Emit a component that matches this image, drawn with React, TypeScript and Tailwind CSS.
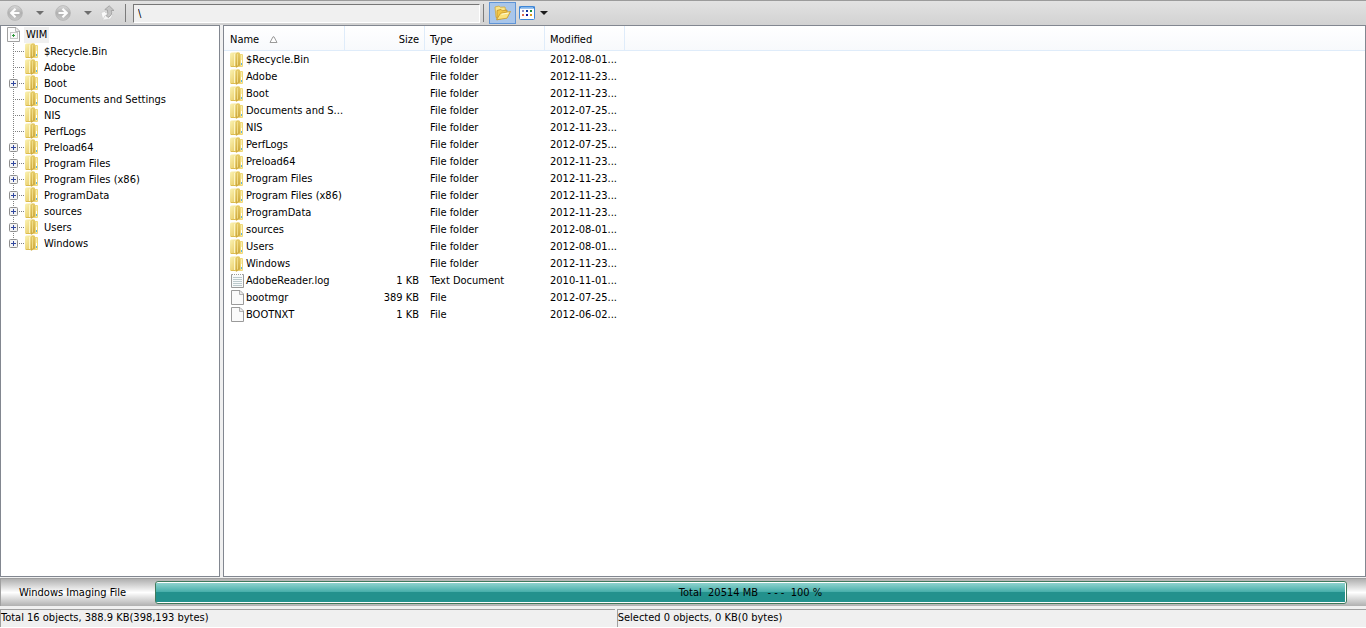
import type { ReactNode } from 'react';

const folders = [
    { name: '$Recycle.Bin', date: '2012-08-01...' },
    { name: 'Adobe', date: '2012-11-23...' },
    { name: 'Boot', date: '2012-11-23...', children: true },
    { name: 'Documents and Settings', short: 'Documents and S...', date: '2012-07-25...' },
    { name: 'NIS', date: '2012-11-23...' },
    { name: 'PerfLogs', date: '2012-07-25...' },
    { name: 'Preload64', date: '2012-11-23...', children: true },
    { name: 'Program Files', date: '2012-11-23...', children: true },
    { name: 'Program Files (x86)', date: '2012-11-23...', children: true },
    { name: 'ProgramData', date: '2012-11-23...', children: true },
    { name: 'sources', date: '2012-08-01...', children: true },
    { name: 'Users', date: '2012-08-01...', children: true },
    { name: 'Windows', date: '2012-11-23...', children: true },
];

const files = [
    { name: 'AdobeReader.log', size: '1 KB', type: 'Text Document', date: '2010-11-01...', lined: true },
    { name: 'bootmgr', size: '389 KB', type: 'File', date: '2012-07-25...' },
    { name: 'BOOTNXT', size: '1 KB', type: 'File', date: '2012-06-02...' },
];

const FolderIcon = () => (
    <svg width="16" height="16" viewBox="0 0 16 16" className="block shrink-0" aria-hidden="true">
        <rect x="9" y="2" width="5" height="13" rx="1" fill="#efd878" />
        <rect x="12" y="3" width="1" height="11" fill="#f8edb0" />
        <rect x="12" y="8" width="1" height="3" fill="#fff" />
        <rect x="12" y="11" width="1" height="2" fill="#5fb4e4" />
        <path d="M1 2 Q1 .5 2.5 .5 H10 Q11 .5 11 2 V14 L7 15 H2.5 Q1 15 1 14Z" fill="url(#folderFront)" />
        <path d="M5 2 L6.5 1 V14.5 L5 15Z" fill="#fdf6c4" />
        <path d="M6.5 2 L8 .5 H10 Q11 .5 11 2 V13 L7.5 15.8 L6.5 15Z" fill="url(#folderSide)" />
        <path d="M8.5 2 V13.5" stroke="#f0dc88" />
        <path d="M2 14.5 H6.5" stroke="#dcbc50" />
    </svg>
);

const PageIcon = ({ lined }: { lined?: boolean }) => (
    <svg width="16" height="16" viewBox="0 0 16 16" className="block shrink-0" aria-hidden="true">
        {lined ? (
            <>
                <path d="M2.5 1.5 H14.5 V14.5 H2.5Z" fill="#f8fafb" stroke="#9a9a9a" />
                <path d="M4 1 H13" stroke="#fff" strokeWidth="2" strokeDasharray="1 1" />
                <path d="M4 4.5 H13 M4 6.5 H13 M4 8.5 H13 M4 10.5 H13 M4 12.5 H13" stroke="#bccacd" />
            </>
        ) : (
            <>
                <path d="M2.5 .5 H11 L14.5 4 V14.5 H2.5Z" fill="#fafafa" stroke="#9a9a9a" />
                <path d="M10.5 1 V4.5 H14" fill="#e9e9e9" stroke="#b0b0b0" />
            </>
        )}
    </svg>
);

const WimIcon = () => (
    <svg width="16" height="16" viewBox="0 0 16 16" className="block shrink-0" aria-hidden="true">
        <path d="M1.5 .5 H10 L13.5 4 V14.5 H1.5Z" fill="#fcfcfc" stroke="#a0a0a0" />
        <path d="M9.5 1 V4.5 H13" fill="#eee" stroke="#b8b8b8" />
        <rect x="4.5" y="5.5" width="7" height="6" fill="#f8f8f8" stroke="#c8c8c8" />
        <path d="M7.5 7 V10 M6 8.5 H9" stroke="#2f9a3c" />
    </svg>
);

const RoundArrow = ({ forward }: { forward?: boolean }) => (
    <svg width="16" height="16" viewBox="0 0 16 16" className="block" aria-hidden="true">
        <circle cx="8" cy="8" r="7.4" fill="url(#orb)" stroke="#b4b4b4" strokeWidth=".8" />
        {forward ? (
            <path d="M3.5 8 H11.5 M7.5 3.8 L11.8 8 L7.5 12.2" fill="none" stroke="#fcfcfc" strokeWidth="2.2" />
        ) : (
            <path d="M12.5 8 H4.5 M8.5 3.8 L4.2 8 L8.5 12.2" fill="none" stroke="#fcfcfc" strokeWidth="2.2" />
        )}
    </svg>
);

const UpIcon = () => (
    <svg width="16" height="16" viewBox="0 0 16 16" className="block" aria-hidden="true">
        <path d="M1 7.5 L4.5 6.5 L6 8 L9.5 7.5 L11 14 L3 15.5Z" fill="#fafafa" stroke="#d0d0d0" strokeWidth=".8" />
        <path d="M2.5 15.2 L5 10.5 L13 9.5 L10.5 14Z" fill="#f4f4f4" stroke="#d0d0d0" strokeWidth=".8" />
        <path d="M8 12.5 Q13 10 11.2 5.5 H14 L9.2 .8 L4.8 4.6 L7.4 5 Q8.6 8.5 6.5 11Z" fill="#c4c4c4" stroke="#9c9c9c" strokeWidth=".8" />
    </svg>
);

const OpenFoldersIcon = () => (
    <svg width="18" height="16" viewBox="0 0 18 16" className="block" aria-hidden="true">
        <path d="M1 2 L5 1 L6.5 2.2 L11 2 L12 9 L2 12.5Z" fill="#fae58a" stroke="#d0a63a" strokeWidth=".8" />
        <path d="M3 5.5 L7 4.4 L8.2 5.8 L13 5 V12 L3 14.8Z" fill="#f3c848" stroke="#c08f24" strokeWidth=".8" />
        <path d="M2.5 14.8 L6.5 8.2 L16.5 6.5 L13 13.2Z" fill="#fbe27c" stroke="#c8982a" strokeWidth=".8" />
        <path d="M7.5 9.3 L14.5 8" stroke="#fffbd8" />
    </svg>
);

const ViewIcon = () => (
    <svg width="16" height="14" viewBox="0 0 16 14" className="block" aria-hidden="true">
        <rect x=".5" y=".5" width="15" height="13" rx="1" fill="#fff" stroke="#3f86d6" />
        <path d="M0 1.5 H16" stroke="#3f86d6" strokeWidth="2" />
        <path d="M2 1.5 H14" stroke="#83b8ee" />
        <rect x="3" y="4" width="2" height="2" fill="#8d8dc4" />
        <rect x="7" y="4" width="2" height="2" fill="#16389a" />
        <rect x="11" y="4" width="2" height="2" fill="#188a3a" />
        <rect x="3" y="8" width="2" height="2" fill="#e06a4a" />
        <rect x="7" y="8" width="2" height="2" fill="#10109a" />
        <rect x="11" y="8" width="2" height="2" fill="#d8981c" />
    </svg>
);

const DropArrow = ({ dark }: { dark?: boolean }) => (
    <svg width="8" height="4" viewBox="0 0 8 4" className="block" aria-hidden="true">
        <path d="M0 0 H8 L4 4Z" fill={dark ? '#1c1c1c' : '#6e6e6e'} />
    </svg>
);

const Expander = () => (
    <svg width="9" height="9" viewBox="0 0 9 9" className="block" aria-hidden="true">
        <rect x=".5" y=".5" width="8" height="8" rx="1" fill="#f4f4f4" stroke="#8e8e8e" />
        <path d="M2 4.5 H7 M4.5 2 V7" stroke="#31479e" />
    </svg>
);

// Dotted connector in front of a tree node; the last node stops halfway.
const Branch = ({ last }: { last?: boolean }) => (
    <svg width="11" height="16" viewBox="0 0 11 16" className="block" aria-hidden="true">
        <path d={last ? 'M.5 0 V8' : 'M.5 0 V16'} stroke="#808080" strokeDasharray="1 1" />
        <path d="M2 8.5 H11" stroke="#808080" strokeDasharray="1 1" />
    </svg>
);

const ToolButton = ({ label, className, children }: { label: string; className: string; children: ReactNode }) => (
    <button type="button" aria-label={label} className={`flex shrink-0 items-center justify-center ${className}`}>
        {children}
    </button>
);

const Toolbar = () => (
    <header className="flex h-[25px] shrink-0 items-center border-t border-[#9b9b9b] bg-linear-to-b from-[#e2e2e2] to-[#d2d2d2]">
        <ToolButton label="Back" className="h-6 w-8 pr-[2px]"><RoundArrow /></ToolButton>
        <ToolButton label="Back history" className="h-6 w-4"><DropArrow /></ToolButton>
        <ToolButton label="Forward" className="h-6 w-8 pr-[2px]"><RoundArrow forward /></ToolButton>
        <ToolButton label="Forward history" className="h-6 w-4"><DropArrow /></ToolButton>
        <ToolButton label="Up" className="h-6 w-6"><UpIcon /></ToolButton>
        <span className="mr-1 ml-[5px] h-[18px] w-px shrink-0 bg-[#7b7b7b]" />
        <input
            aria-label="Path"
            defaultValue="\"
            className="ml-[3px] h-[19px] w-[347px] border border-t-[#777] border-l-[#777] border-r-white border-b-white bg-[#f0f0f0] px-1 outline-none"
        />
        <span className="mr-[5px] ml-[3px] h-[18px] w-px shrink-0 bg-[#7b7b7b]" />
        <ToolButton label="Folders" className="h-[22px] w-[27px] border border-[#5f94d6] bg-[#a9c6ea]"><OpenFoldersIcon /></ToolButton>
        <ToolButton label="View" className="h-6 w-[22px]"><ViewIcon /></ToolButton>
        <ToolButton label="View options" className="h-6 w-3"><DropArrow dark /></ToolButton>
    </header>
);

const Tree = () => (
    <nav className="w-[220px] shrink-0 overflow-hidden border border-[#828790] bg-white pt-px pl-[5px]">
        <div className="flex h-4 items-center">
            <WimIcon />
            <span className="ml-[2px] bg-[#f0f0f0] px-[2px] leading-4">WIM</span>
        </div>
        <ul>
            {folders.map((folder, idx) => (
                <li key={folder.name} className="flex h-4 items-center pl-[7px]">
                    <span className="relative">
                        <Branch last={idx === folders.length - 1} />
                        {folder.children && (
                            <button type="button" aria-label={`Expand ${folder.name}`} className="absolute top-1 -left-1">
                                <Expander />
                            </button>
                        )}
                    </span>
                    <FolderIcon />
                    <span className="pt-px pl-1 whitespace-nowrap">{folder.name}</span>
                </li>
            ))}
        </ul>
    </nav>
);

const FileList = () => (
    <main className="min-w-0 flex-1 overflow-hidden border border-[#828790] bg-white">
        <table className="w-full table-fixed border-separate border-spacing-0">
            <colgroup>
                <col className="w-[121px]" />
                <col className="w-[80px]" />
                <col className="w-[120px]" />
                <col className="w-[80px]" />
                <col />
            </colgroup>
            <thead>
                <tr className="h-[25px] bg-linear-to-b from-white to-[#f7f9fc] text-left">
                    <th className="border-r border-b border-[#dfecfa] p-0 pt-[3px] pl-[6px] font-normal">
                        <span className="flex items-center gap-[10px]">
                            Name
                            <svg width="9" height="7" viewBox="0 0 9 7" aria-hidden="true">
                                <path d="M1 6.5 H8 L5 .8 H4Z" fill="#fff" stroke="#9a9a9a" />
                            </svg>
                        </span>
                    </th>
                    <th className="border-r border-b border-[#dfecfa] p-0 pt-[3px] pr-[5px] text-right font-normal">Size</th>
                    <th className="border-r border-b border-[#dfecfa] p-0 pt-[3px] pl-[5px] font-normal">Type</th>
                    <th className="border-r border-b border-[#dfecfa] p-0 pt-[3px] pl-[5px] font-normal">Modified</th>
                    <td className="border-b border-[#dfecfa]" />
                </tr>
            </thead>
            <tbody className="whitespace-nowrap">
                {folders.map((folder) => (
                    <tr key={folder.name} className="h-[17px]">
                        <td className="p-0 pl-[5px]"><span className="flex items-center gap-px"><FolderIcon /><span className="pt-px">{folder.short ?? folder.name}</span></span></td>
                        <td />
                        <td className="p-0 pt-px pl-[5px]">File folder</td>
                        <td className="p-0 pt-px pl-[5px]">{folder.date}</td>
                        <td />
                    </tr>
                ))}
                {files.map((file) => (
                    <tr key={file.name} className="h-[17px]">
                        <td className="p-0 pl-[5px]"><span className="flex items-center gap-px"><PageIcon lined={file.lined} /><span className="pt-px">{file.name}</span></span></td>
                        <td className="p-0 pt-px pr-[6px] text-right">{file.size}</td>
                        <td className="p-0 pt-px pl-[5px]">{file.type}</td>
                        <td className="p-0 pt-px pl-[5px]">{file.date}</td>
                        <td />
                    </tr>
                ))}
            </tbody>
        </table>
    </main>
);

const App = () => (
    <div className="flex h-screen flex-col overflow-hidden bg-[#f0f0f0] font-['Tahoma','DejaVu_Sans_Condensed',sans-serif] text-[11px] leading-4 text-black">
        {/* Gradients shared by the icons */}
        <svg width="0" height="0" className="absolute" aria-hidden="true">
            <defs>
                <linearGradient id="folderFront" x1="0" y1="0" x2="1" y2="1">
                    <stop offset="0" stopColor="#fbf3b4" />
                    <stop offset="1" stopColor="#e2c050" />
                </linearGradient>
                <linearGradient id="folderSide" x1="0" y1="0" x2="0" y2="1">
                    <stop offset="0" stopColor="#e6cc68" />
                    <stop offset="1" stopColor="#cca63a" />
                </linearGradient>
                <linearGradient id="orb" x1="0" y1="0" x2="0" y2="1">
                    <stop offset="0" stopColor="#d8d8d8" />
                    <stop offset=".5" stopColor="#b0b0b0" />
                    <stop offset="1" stopColor="#c8c8c8" />
                </linearGradient>
            </defs>
        </svg>

        <Toolbar />

        <div className="flex min-h-0 flex-1 gap-[3px]">
            <Tree />
            <FileList />
        </div>

        {/* Progress */}
        <section className="mt-px flex h-[28px] shrink-0 items-center border-t border-l border-[#a0a0a0] bg-linear-to-b from-[#b0b0b0] via-white to-[#b0b0b0] pr-[19px]">
            <span className="w-[154px] shrink-0 pl-[18px]">Windows Imaging File</span>
            <div
                role="progressbar"
                aria-label="Total"
                aria-valuenow={100}
                className="flex h-[23px] flex-1 items-center justify-center rounded-[3px] border border-[#3f7a5c] bg-white py-px pr-px"
            >
                <span className="flex h-full w-full items-center justify-center bg-[linear-gradient(to_bottom,#8fd3ce_0%,#42aca8_50%,#23918d_50%,#23918d_100%)] whitespace-pre">
                    {'Total  20514 MB   - - -  100 %'}
                </span>
            </div>
        </section>

        {/* Status bar */}
        <footer className="mt-[3px] flex h-[19px] shrink-0 gap-[2px] border-b border-white">
            <span className="w-[45%] border-t border-l border-[#a0a0a0]">Total 16 objects, 388.9 KB(398,193 bytes)</span>
            <span className="flex-1 border-t border-l border-[#a0a0a0]">Selected 0 objects, 0 KB(0 bytes)</span>
        </footer>
    </div>
);

export default App;
